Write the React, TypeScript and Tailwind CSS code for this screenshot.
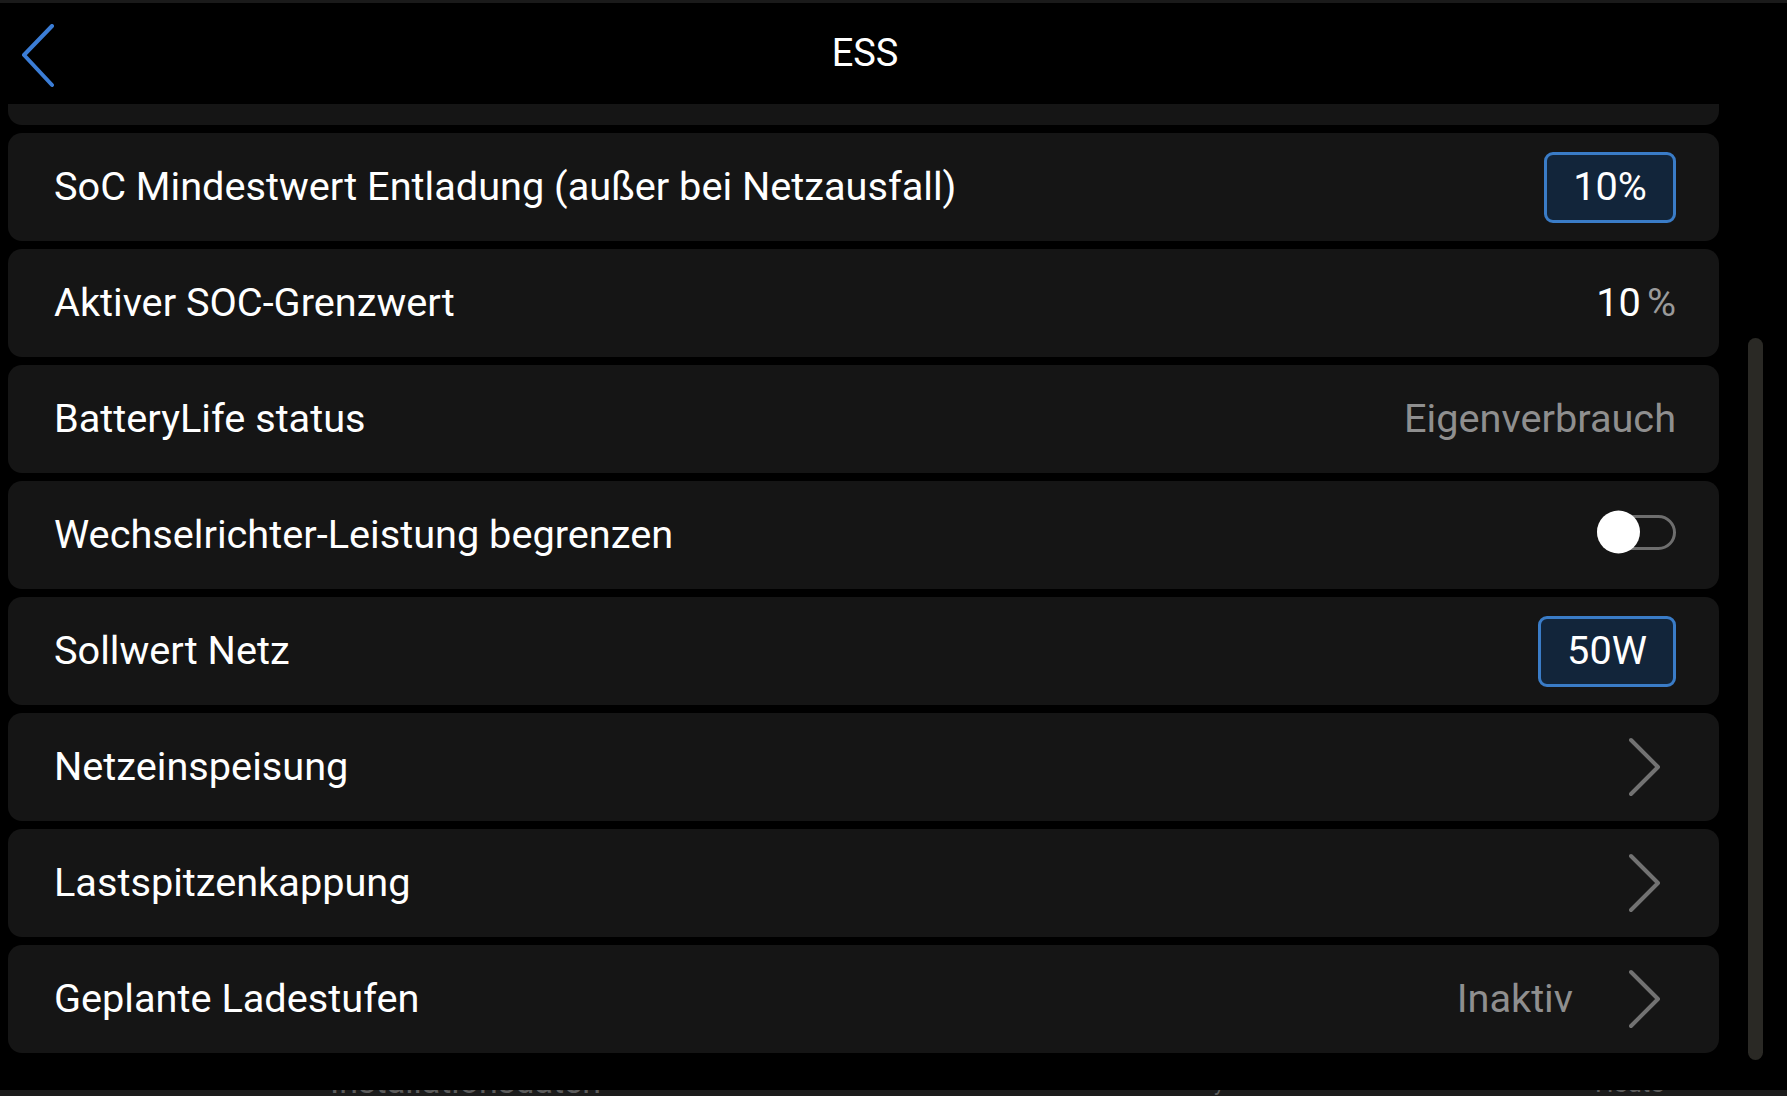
import React from "react";

type Row = {
  label: string;
  kind: "box" | "value" | "muted" | "toggle" | "link";
  value?: string;
  unit?: string;
  boxW?: string;
};

const rows: Row[] = [
  { label: "", kind: "value" },
  { label: "SoC Mindestwert Entladung (außer bei Netzausfall)", kind: "box", value: "10%", boxW: "w-[132px]" },
  { label: "Aktiver SOC-Grenzwert", kind: "value", value: "10", unit: "%" },
  { label: "BatteryLife status", kind: "muted", value: "Eigenverbrauch" },
  { label: "Wechselrichter-Leistung begrenzen", kind: "toggle" },
  { label: "Sollwert Netz", kind: "box", value: "50W", boxW: "w-[138px]" },
  { label: "Netzeinspeisung", kind: "link" },
  { label: "Lastspitzenkappung", kind: "link" },
  { label: "Geplante Ladestufen", kind: "link", value: "Inaktiv" },
];

const Chevron = () => (
  <svg width="47" height="60" viewBox="0 0 47 60" fill="none" className="shrink-0">
    <path d="M2 3 L29 30 L2 57" stroke="#727272" strokeWidth="4" strokeLinecap="round" strokeLinejoin="round" />
  </svg>
);

const RowRight = ({ row }: { row: Row }) => {
  if (row.kind === "box") {
    return (
      <div className={`${row.boxW} h-[71px] flex items-center justify-center rounded-[9px] border-[3px] border-[#3a7cc7] bg-[#12253a] text-[39.7px] text-white`}>
        {row.value}
      </div>
    );
  }
  if (row.kind === "value") {
    return (
      <div className="text-[39.7px] text-white">
        {row.value}
        <span className="ml-[6px] text-[#9a9a9a]">{row.unit}</span>
      </div>
    );
  }
  if (row.kind === "muted") {
    return <div className="text-[39.7px] text-[#8f8f8f]">{row.value}</div>;
  }
  if (row.kind === "toggle") {
    return (
      <div className="relative w-[79px] h-[35px] -mt-[6px] rounded-full border-[3px] border-[#6e6e6e]">
        <span className="absolute -left-[3px] top-1/2 -translate-y-1/2 w-[43px] h-[43px] rounded-full bg-white" />
      </div>
    );
  }
  return (
    <div className="flex items-center">
      {row.value && <span className="mr-[56px] text-[39.7px] text-[#8f8f8f]">{row.value}</span>}
      <Chevron />
    </div>
  );
};

export default function App() {
  return (
    <div className="relative w-[1787px] h-[1096px] overflow-hidden bg-black font-['Roboto',sans-serif]">
      <div className="h-[3px] bg-[#1a1a1a]" />

      {/* header */}
      <div className="relative w-[1730px] h-[101px] flex items-center justify-center">
        <button className="absolute left-[22px] top-[21px]">
          <svg width="34" height="64" viewBox="0 0 34 64" fill="none">
            <path d="M30 2 L2 31 L30 61" stroke="#3b7dd6" strokeWidth="4" strokeLinecap="round" strokeLinejoin="round" />
          </svg>
        </button>
        <h1 className="text-[38px] text-white leading-none -mt-[2px]">ESS</h1>
      </div>

      {/* list */}
      <div className="h-[986px] overflow-hidden">
        <div className="-mt-[87px] ml-2 w-[1711px] flex flex-col gap-2">
          {rows.map((row, i) => (
            <div
              key={i}
              className="h-[108px] shrink-0 rounded-[14px] bg-[#151515] flex items-center justify-between pl-[46px] pr-[43px]"
            >
              <span className="text-[39.7px] text-white">{row.label}</span>
              {row.label && <RowRight row={row} />}
            </div>
          ))}
        </div>
      </div>

      {/* bottom bar, mostly off screen */}
      <div className="h-[6px] bg-[#1c1c1c] overflow-hidden flex text-[#5c5c5c]">
        <span className="ml-[330px] -mt-[26px] text-[34px] leading-none">Installationsdaten</span>
        <span className="ml-[600px] -mt-[18px] text-[22px] leading-none">Systemübersicht</span>
        <span className="ml-[230px] -mt-[20px] text-[26px] leading-none">Heute</span>
      </div>

      {/* scrollbar */}
      <div className="absolute left-[1748px] top-[338px] w-[15px] h-[722px] rounded-full bg-[#2a2925]" />
    </div>
  );
}
